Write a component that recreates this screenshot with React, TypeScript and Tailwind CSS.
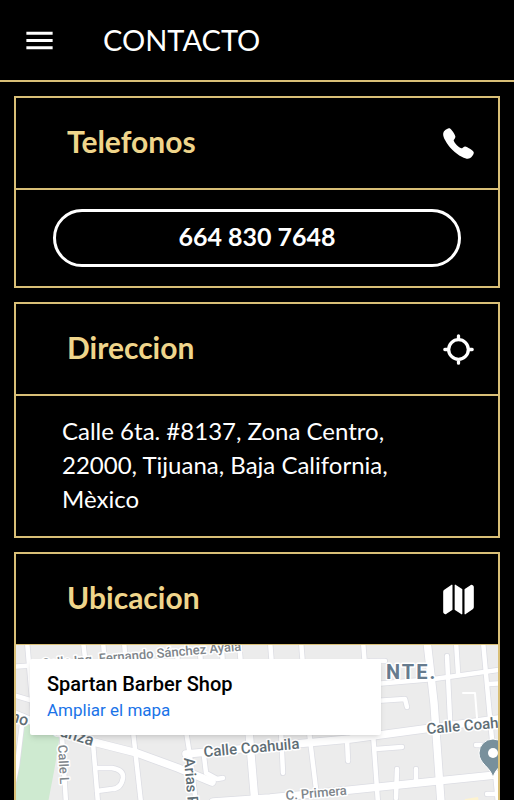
import type { ReactNode } from 'react';
import { IoMdMenu } from 'react-icons/io';
import { IoCall, IoLocate, IoMap } from 'react-icons/io5';

// street paths, drawn once as an outline and once as the fill
const wideStreets = [
  'M10 711 L62 733 L137 752 L178 767 L212 781',
  'M186 753 L350 738 L424 728 L505 717',
  'M249 730 L255 802',
  'M427 640 L434 702 L441 802',
  'M213 801 L270 797 L350 789 L505 773',
];

const streets = [
  'M27 640 L33 710',
  'M10 666 L40 664',
  'M10 693 L40 702',
  'M23 715 L17 765 L12 790',
  'M62 736 L66 802',
  'M93 742 L98 802',
  'M133 730 L141 802',
  'M97 767 L112 767 Q124 769 123 777 Q121 788 112 788 L97 790',
  'M83 640 L86 665',
  'M103 640 L105 665',
  'M124 640 L126 665',
  'M177 650 L178 665',
  'M200 650 L201 665',
  'M222 650 L223 665',
  'M239 640 L241 665',
  'M270 640 L272 665',
  'M301 640 L303 665',
  'M363 640 L365 665',
  'M370 660 H385',
  'M375 683 L434 678 L505 668',
  'M447 655 L450 718',
  'M456 640 L458 672',
  'M483 640 L491 728 L498 802',
  'M489 683 L505 682',
  'M375 700 L405 698 L407 706',
  'M186 730 L190 755 L196 802',
  'M204 755 L206 772 L217 778 L223 777',
  'M281 730 L283 772',
  'M309 730 L316 788',
  'M347 738 L348 760',
  'M373 732 L378 802',
  'M376 748 L402 746',
  'M397 768 L396 797',
  'M416 768 L416 780',
  'M476 744 H484',
  'M487 793 H505',
];

interface SectionProps {
  title: string;
  icon: ReactNode;
  last?: boolean;
  children: ReactNode;
}

function Section({ title, icon, last, children }: SectionProps) {
  return (
    <section
      className={
        last
          ? 'flex flex-1 flex-col border-2 border-b-0 border-[#d9bf77]'
          : 'border-2 border-[#d9bf77]'
      }
    >
      <div className="flex h-[90px] shrink-0 items-center justify-between pl-[51px] pr-[22px]">
        <h2 className="pb-1 text-[30px] font-bold leading-9 text-[#efd58b]">{title}</h2>
        {icon}
      </div>
      {children}
    </section>
  );
}

function StreetMap() {
  return (
    <svg
      viewBox="16 644 482 156"
      preserveAspectRatio="xMinYMin slice"
      className="absolute inset-0 h-full w-full bg-[#ececec]"
      fontFamily="Roboto, sans-serif"
    >
      <path d="M23 715 L60 733 L55 765 L48 802 H10 V775 Z" fill="#ceead0" />
      <path d="M465 798 L478 796 L479 802 H464 Z" fill="#fdf3d0" />
      <g fill="none" strokeLinecap="round" strokeLinejoin="round">
        {streets.map((d) => (
          <path key={d} d={d} stroke="#dcdde3" strokeWidth="6" />
        ))}
        {wideStreets.map((d) => (
          <path key={d} d={d} stroke="#dcdde3" strokeWidth="9" />
        ))}
        {streets.map((d) => (
          <path key={d} d={d} stroke="#ffffff" strokeWidth="4.5" />
        ))}
        {wideStreets.map((d) => (
          <path key={d} d={d} stroke="#ffffff" strokeWidth="7.5" />
        ))}
        <path d="M463 692 H475 L477 717" stroke="#ffffff" strokeWidth="2" />
      </g>

      {/* Street names */}
      <g
        fill="#5f6e75"
        stroke="#ffffff"
        strokeWidth="3"
        strokeLinejoin="round"
        paintOrder="stroke"
        fontWeight="500"
        fontSize="15"
      >
        <text transform="translate(42 667) rotate(-5)" fontSize="13" fill="#80868b">
          Calle Ing. Fernando Sánchez Ayala
        </text>
        <text transform="translate(92 745) rotate(17)" textAnchor="end" fontSize="16">
          Venustiano Carranza
        </text>
        <text transform="translate(58 744) rotate(87)" fontSize="13" fill="#80868b">
          Calle L
        </text>
        <text transform="translate(184 757) rotate(85)">Arias P.</text>
        <text transform="translate(204 756) rotate(-5)">Calle Coahuila</text>
        <text transform="translate(427 733) rotate(-5)">Calle Coahuila</text>
        <text transform="translate(286 799) rotate(-5)" fontSize="13" fill="#80868b">
          C. Primera
        </text>
        <text
          x="386"
          y="678"
          fontSize="20"
          fontWeight="700"
          fill="#667b8e"
          className="tracking-widest"
        >
          NTE.
        </text>
      </g>

      <path
        d="M493 777 C491 766 479 763 479 752 A14 14 0 0 1 507 752 C507 763 495 766 493 777 Z"
        fill="#78909c"
        stroke="#ffffff"
        strokeWidth="1"
      />
      <circle cx="493" cy="752" r="5" fill="#ffffff" />
    </svg>
  );
}

export default function App() {
  return (
    <div className="flex h-screen flex-col overflow-hidden bg-black font-['Lato',sans-serif] text-white">
      <header className="flex h-[82px] shrink-0 items-center border-b-2 border-[#d9bf77] pl-[22px]">
        <button type="button" aria-label="Menu">
          <IoMdMenu size={35} />
        </button>
        <h1 className="pl-[46px] text-[29px] leading-9">CONTACTO</h1>
      </header>

      <main className="flex flex-1 flex-col gap-[14px] px-[14px] pt-[14px]">
        <Section title="Telefonos" icon={<IoCall size={35} />}>
          <div className="border-t-2 border-[#d9bf77] px-[37px] py-[19px]">
            <a
              href="tel:6648307648"
              className="flex h-[58px] items-center justify-center rounded-full border-[3px] border-white pb-1 text-[25px] font-bold leading-8"
            >
              664 830 7648
            </a>
          </div>
        </Section>

        <Section title="Direccion" icon={<IoLocate size={35} />}>
          <p className="border-t-2 border-[#d9bf77] pb-5 pl-[46px] pr-[90px] pt-[18px] text-[24px] leading-[34px]">
            Calle 6ta. #8137, Zona Centro, 22000, Tijuana, Baja California, Mèxico
          </p>
        </Section>

        <Section title="Ubicacion" icon={<IoMap size={35} />} last>
          <div className="relative min-h-[156px] flex-1 overflow-hidden border-t border-[#d9bf77]">
            <StreetMap />
            <div className="absolute left-[14px] top-[14px] w-[351px] rounded-xs bg-white px-[17px] py-3 font-['Roboto',sans-serif] shadow-md">
              <p className="text-[20px] font-medium leading-[26px] text-black">
                Spartan Barber Shop
              </p>
              <a href="#mapa" className="block text-[17px] leading-[26px] text-[#1a73e8]">
                Ampliar el mapa
              </a>
            </div>
          </div>
        </Section>
      </main>
    </div>
  );
}
